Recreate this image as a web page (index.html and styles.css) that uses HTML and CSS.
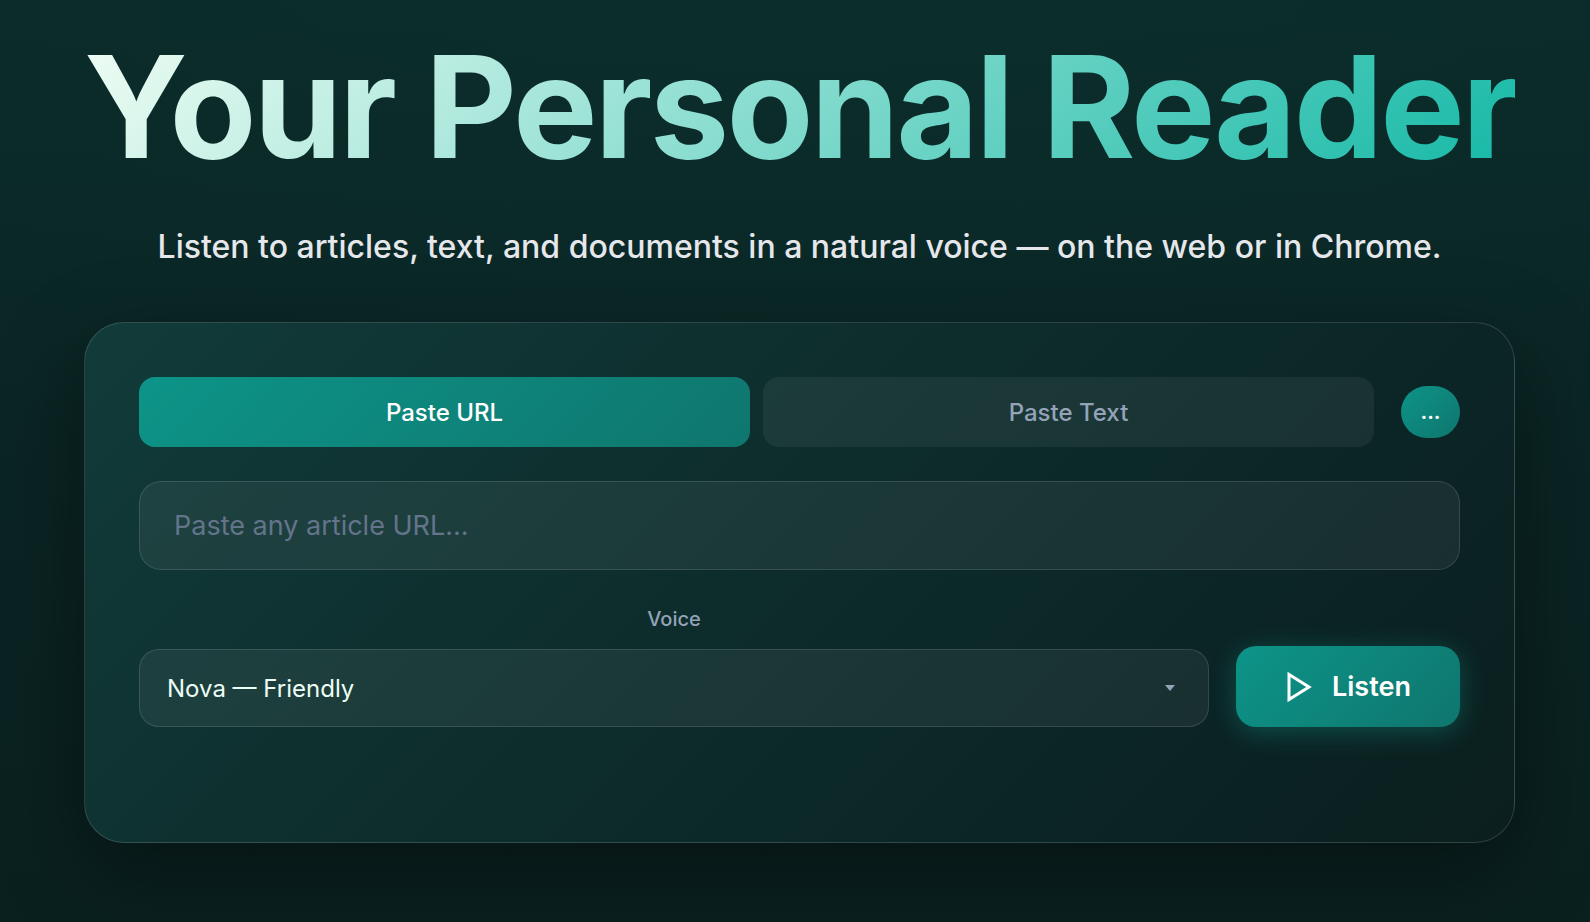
FILE: index.html
```html
<!DOCTYPE html>
<html lang="en">
<head>
    <meta charset="UTF-8">
    <meta name="viewport" content="width=device-width, initial-scale=1.0">
    <title>Your Personal Reader</title>
    <link rel="stylesheet" href="styles.css">
</head>
<body>
    <main class="hero">
        <h1>Your Personal Reader</h1>
        <p class="subtitle">Listen to articles, text, and documents in a natural voice — on the web or in Chrome.</p>

        <form class="card" onsubmit="return false">
            <div class="tabs">
                <button type="button" class="tab active">Paste URL</button>
                <button type="button" class="tab">Paste Text</button>
                <button type="button" class="more" aria-label="More options">...</button>
            </div>

            <input type="url" class="url-input" placeholder="Paste any article URL..." aria-label="Article URL">

            <div class="controls">
                <div class="voice">
                    <label for="voice">Voice</label>
                    <div class="select-wrap">
                        <select id="voice">
                            <option>Nova — Friendly</option>
                        </select>
                        <svg class="caret" viewBox="0 0 10 6" aria-hidden="true"><path d="M0 0h10L5 6z"/></svg>
                    </div>
                </div>
                <button type="submit" class="listen">
                    <svg viewBox="0 0 27 32" aria-hidden="true"><path d="M4 3.5v25L24 16z"/></svg>
                    Listen
                </button>
            </div>
        </form>
    </main>
</body>
</html>
```
FILE: styles.css
```css
* {
    box-sizing: border-box;
}
body {
    margin: 0;
    min-height: 100vh;
    font-family: Inter, sans-serif;
    color: #e8fbf5;
    background: radial-gradient(ellipse 90% 60% at 50% 0, rgba(20, 184, 166, 0.03), transparent),
                linear-gradient(180deg, #0b2a28 0%, #0a2625 33%, #0a201f 100%);
}
.hero {
    padding: 28px 75px 78px 84px;
    text-align: center;
}
h1 {
    margin: 0 0 39px;
    font-size: 142px;
    font-weight: 700;
    line-height: 156px;
    letter-spacing: -0.02em;
    white-space: nowrap;
    background: linear-gradient(135deg, #f0fdf4 0%, #14b8a6 100%);
    -webkit-background-clip: text;
    background-clip: text;
    color: transparent;
}
.subtitle {
    margin: 0 0 51px;
    font-size: 32px;
    font-weight: 500;
    line-height: 48px;
    color: #e5e7eb;
}
.card {
    padding: 54px 54px 115px;
    border: 1px solid rgba(255, 255, 255, 0.14);
    border-radius: 40px;
    background: linear-gradient(135deg, #113b39 0%, #0d2d2c 45%, #0b2324 80%, #0b1f1e 100%);
    box-shadow: 0 27px 86px rgba(0, 0, 0, 0.4);
}
button, input, select {
    font-family: inherit;
}
button {
    border: none;
    color: white;
    cursor: pointer;
}
.tabs {
    display: flex;
    align-items: center;
    gap: 13px;
    margin-bottom: 34px;
}
.tab {
    flex: 1;
    height: 70px;
    border-radius: 16px;
    background: rgba(255, 255, 255, 0.06);
    color: #94a3b8;
    font-size: 24px;
    font-weight: 500;
}
.tab.active,
.more,
.listen {
    background: linear-gradient(135deg, #0d9488, #0f766e);
    color: white;
}
.more {
    width: 59px;
    height: 52px;
    margin-left: 14px;
    padding: 0;
    border-radius: 27px;
    font-size: 20px;
    font-weight: 700;
}
.url-input {
    display: block;
    width: 100%;
    height: 89px;
    padding: 0 34px;
    border: 1px solid rgba(255, 255, 255, 0.12);
    border-radius: 22px;
    background: rgba(255, 255, 255, 0.06);
    color: #e8fbf5;
    font-size: 27px;
}
.url-input::placeholder {
    color: #64748b;
}
.controls {
    display: flex;
    align-items: flex-end;
    gap: 27px;
    margin-top: 33px;
}
.voice {
    flex: 1;
}
.voice label {
    display: block;
    margin-bottom: 14px;
    font-size: 20px;
    font-weight: 500;
    line-height: 32px;
    color: #94a3b8;
}
.select-wrap {
    position: relative;
}
select {
    display: block;
    width: 100%;
    height: 78px;
    padding: 0 27px;
    border: 1px solid rgba(255, 255, 255, 0.12);
    border-radius: 20px;
    appearance: none;
    background: rgba(255, 255, 255, 0.06);
    color: #ecfdf5;
    font-size: 24px;
}
.caret {
    position: absolute;
    right: 34px;
    top: 36px;
    width: 10px;
    height: 6px;
    fill: #94a3b8;
}
.listen {
    display: flex;
    align-items: center;
    justify-content: center;
    gap: 20px;
    width: 224px;
    height: 81px;
    border-radius: 20px;
    box-shadow: 0 5px 27px rgba(20, 184, 166, 0.3);
    font-size: 27px;
    font-weight: 600;
}
.listen svg {
    width: 27px;
    height: 32px;
    fill: none;
    stroke: white;
    stroke-width: 3;
}
```
